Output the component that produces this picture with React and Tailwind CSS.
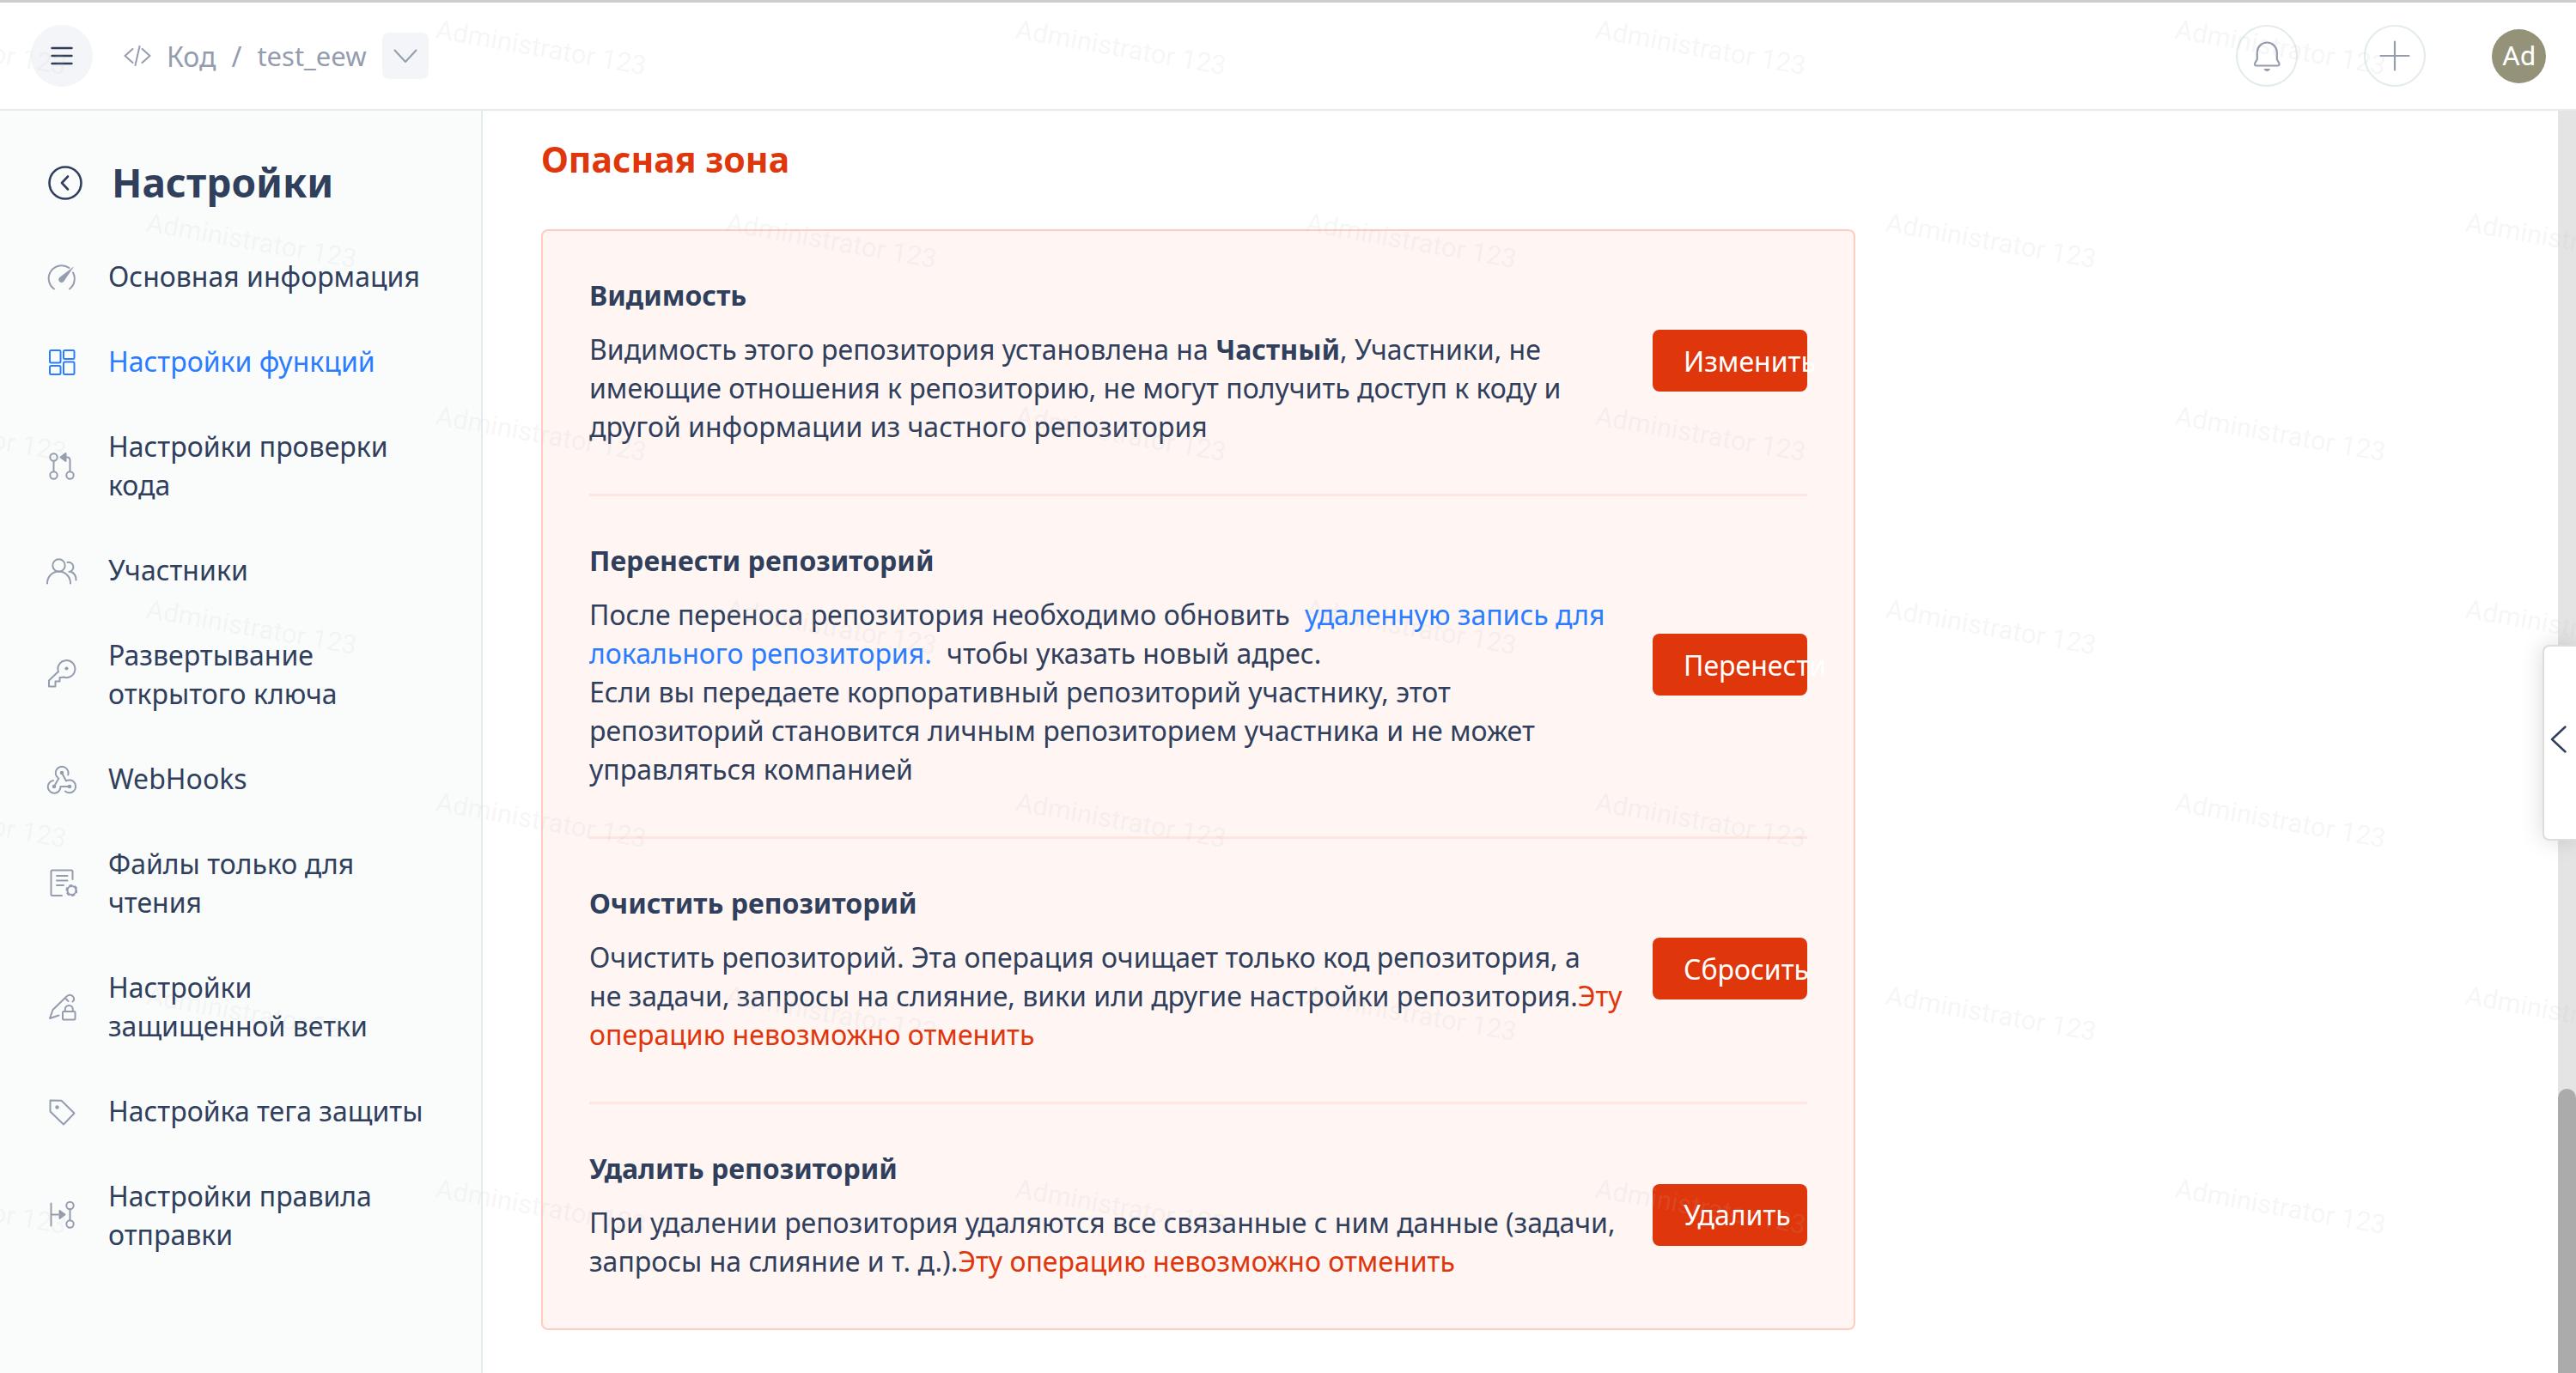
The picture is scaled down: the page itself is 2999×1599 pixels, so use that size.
const icons = {
  gauge: (
    <>
      <path d="M9 32.5A15 15 0 1 1 26.5 8M31 13.500A15 15 0 0 1 27 32.500" />
      <path d="M31 7.500L20.500 23A3.200 3.200 0 1 1 16 18.800Z" fill="currentColor" strokeWidth="0.6" />
    </>
  ),
  grid: (
    <>
      <rect x="4" y="5" width="12.500" height="14.500" rx="1.500" />
      <rect x="20" y="5" width="12.500" height="10" rx="1.500" />
      <rect x="4" y="23" width="12.500" height="10" rx="1.500" />
      <rect x="20" y="18.500" width="12.500" height="14.500" rx="1.500" />
    </>
  ),
  pull: (
    <>
      <circle cx="8.500" cy="8.500" r="4.200" />
      <circle cx="8.500" cy="29.500" r="4.200" />
      <circle cx="27.500" cy="29.500" r="4.200" />
      <path d="M8.500 12.700V25.300M27.500 25.300V12Q27.500 8.500 24 8.500H22" />
      <path d="M16.500 8.500L22.500 4V13Z" fill="currentColor" />
    </>
  ),
  users: (
    <>
      <circle cx="14.500" cy="12.500" r="7.200" />
      <path d="M1 33.500V33A13.500 13.500 0 0 1 28 33V33.500M24.500 9A5.600 5.600 0 1 1 26.500 20M29 20A10 10 0 0 1 34.500 29.500" />
    </>
  ),
  key: (
    <>
      <path d="M14 15.500A10 10 0 1 1 20 21.500L17.500 22H15.500V26.500H10.500V32.500H3V25.500L13.500 15.500" />
      <circle cx="23.500" cy="11.500" r="2.100" fill="currentColor" stroke="none" />
    </>
  ),
  hook: (
    <>
      <path d="M25.200 13.500A7.400 7.400 0 1 0 14.300 17.500L9 27" />
      <path d="M8 20A7.400 7.400 0 1 0 16.500 27H27" />
      <path d="M22 32.500A7.400 7.400 0 1 0 23 20.500L18 11" />
      <g fill="currentColor" stroke="none">
        <circle cx="18" cy="11" r="2.300" />
        <circle cx="9" cy="27" r="2.300" />
        <circle cx="27" cy="27" r="2.300" />
      </g>
    </>
  ),
  file: (
    <>
      <path d="M18 33H7Q5.500 33 5.500 31.500V5Q5.500 3.500 7 3.500H29Q30.500 3.500 30.500 5V14M12 10H24.500M12 15.500H24.500M12 21H20" />
      <circle cx="29.500" cy="27" r="5" strokeWidth="2.200" />
      <circle cx="29.500" cy="27" r="6.200" strokeWidth="1.800" strokeDasharray="2.600 3.900" />
    </>
  ),
  lock: (
    <>
      <path d="M14.500 28.500L4 32L7.500 22L23.500 6.500Q27.500 3 31 6.500Q33.500 10 30.500 12.500M22 8.500L25.500 12" />
      <rect x="19" y="24" width="14.500" height="9.500" rx="1" />
      <path d="M21.800 24V21.500A4.500 4.500 0 0 1 30.800 21.500V24" />
    </>
  ),
  tag: (
    <>
      <path d="M4.500 5.500L17.500 5.800L32.500 20.500L20 33.500L4.500 18.500Z" />
      <circle cx="12.500" cy="13.500" r="2.200" fill="currentColor" stroke="none" />
    </>
  ),
  push: (
    <>
      <circle cx="27.500" cy="7" r="4.200" />
      <circle cx="27.500" cy="28.500" r="4.200" />
      <path d="M27.500 11.200V24.300M5.500 4.500V30.500M5.500 17.500H14" />
      <path d="M15.500 13L21.500 17.500L15.500 22Z" fill="currentColor" />
    </>
  ),
};

function NavIcon({ name }) {
  return (
    <svg viewBox="0 0 36 36" className="size-9 shrink-0" fill="none" stroke="currentColor" strokeWidth="2" strokeLinecap="round" strokeLinejoin="round" aria-hidden="true">
      {icons[name]}
    </svg>
  );
}

const nav = [
  ["gauge", "Основная информация"],
  ["grid", "Настройки функций"],
  ["pull", "Настройки проверки кода"],
  ["users", "Участники"],
  ["key", "Развертывание открытого ключа"],
  ["hook", "WebHooks"],
  ["file", "Файлы только для чтения"],
  ["lock", "Настройки защищенной ветки"],
  ["tag", "Настройка тега защиты"],
  ["push", "Настройки правила отправки"],
];

function Header() {
  return (
    <header className="flex h-[129px] shrink-0 items-center border-t-[3px] border-b-2 border-t-[#cccecc] border-b-[#e3ebee] bg-white pr-[35px] pl-9 text-[#949cae]">
      <button aria-label="Меню" className="flex size-[72px] items-center justify-center rounded-full bg-[#f4f5f8] text-[#303f5c]">
        <svg viewBox="0 0 26 22" className="h-[22px] w-[26px]" stroke="currentColor" strokeWidth="2.4" strokeLinecap="round" aria-hidden="true">
          <path d="M1.500 2H24.500M1.500 11H24.500M1.500 20H24.500" />
        </svg>
      </button>
      <nav className="flex items-center pl-9">
        <svg viewBox="0 0 32 24" className="mr-[18px] h-6 w-8" fill="none" stroke="currentColor" strokeWidth="2" strokeLinecap="round" strokeLinejoin="round" aria-hidden="true">
          <path d="M10.500 4L1.500 12L10.500 20M21.500 4L30.500 12L21.500 20M18.500 1L13.500 23" />
        </svg>
        <a href="#code">Код</a>
        <span className="mx-[18px]">/</span>
        <a href="#repo" className="text-[31px]">test_eew</a>
      </nav>
      <button aria-label="Выбрать репозиторий" className="ml-[18px] flex size-[54px] items-center justify-center rounded-lg bg-[#f4f5f8]">
        <svg viewBox="0 0 28 18" className="h-[18px] w-7" fill="none" stroke="currentColor" strokeWidth="2" strokeLinecap="round" strokeLinejoin="round" aria-hidden="true">
          <path d="M1.500 2.500L14 16L26.500 2.500" />
        </svg>
      </button>
      <div className="ml-auto flex items-center gap-[77px]">
        <button aria-label="Уведомления" className="flex size-[72px] items-center justify-center rounded-full border-2 border-[#e3ebee]">
          <svg viewBox="0 0 36 36" className="size-9" fill="none" stroke="currentColor" strokeWidth="2.200" strokeLinejoin="round" aria-hidden="true">
            <path d="M6.800 14A11.500 11.500 0 0 1 29.800 14V22L32.300 26.500Q33.300 29.500 30.500 29.500H6Q3.300 29.500 4.300 26.500L6.800 22Z" />
            <path d="M14.500 33H22Q21 36 18.300 36Q15.500 36 14.500 33Z" fill="currentColor" stroke="none" />
          </svg>
        </button>
        <button aria-label="Создать" className="flex size-[72px] items-center justify-center rounded-full border-2 border-[#e3ebee]">
          <svg viewBox="0 0 36 36" className="size-9" stroke="currentColor" strokeWidth="2.200" strokeLinecap="round" aria-hidden="true">
            <path d="M18 1.500V34.500M1.500 18H34.500" />
          </svg>
        </button>
        <button className="flex size-[63px] items-center justify-center rounded-full bg-[#95927a] font-['Roboto',sans-serif] text-white">Ad</button>
      </div>
    </header>
  );
}

function Sidebar() {
  return (
    <aside className="w-[562px] shrink-0 border-r-2 border-[#e3ebee] bg-[#fafcfc] pt-[53px] pl-[54px]">
      <div className="flex items-center gap-[34px]">
        <button aria-label="Назад">
          <svg viewBox="0 0 42 42" className="size-[42px]" fill="none" stroke="currentColor" strokeWidth="2.600" strokeLinecap="round" strokeLinejoin="round" aria-hidden="true">
            <circle cx="22" cy="22" r="18.500" />
            <path d="M25 14.500L18 22L25 29.500" />
          </svg>
        </button>
        <h1 className="text-[46px] leading-[60px] font-bold">Настройки</h1>
      </div>
      <nav className="mt-[57px] flex flex-col gap-[54px] pr-[54px]">
        {nav.map(([icon, label]) => (
          <a key={icon} href={"#" + icon} className={icon === "grid" ? "flex items-center gap-9 text-[#2b7dff]" : "flex items-center gap-9"}>
            <span className={icon === "grid" ? "shrink-0" : "shrink-0 text-[#949cae]"}>
              <NavIcon name={icon} />
            </span>
            <span>{label}</span>
          </a>
        ))}
      </nav>
    </aside>
  );
}

function Section({ title, action, children }) {
  return (
    <section className="flex items-center gap-[30px] border-b-[3px] border-[#ffe4df] pt-[52px] pb-[56px] last:border-b-0">
      <div className="flex-1">
        <h3 className="mb-[18px] font-bold">{title}</h3>
        <p>{children}</p>
      </div>
      <button className="h-[72px] w-[180px] shrink-0 rounded-lg bg-[#df360c] pl-9 text-left whitespace-nowrap text-white">{action}</button>
    </section>
  );
}

function Watermark() {
  return (
    <div aria-hidden="true" className="pointer-events-none absolute inset-0 overflow-hidden font-['Roboto',sans-serif] text-[31px] text-[rgba(190,190,190,0.13)] select-none">
      <div className="-mt-[57px] -ml-[506px]">
        {[0, 1, 2, 3, 4, 5, 6, 7].map((row) => (
          <div key={row} className="flex h-[225px] items-center odd:pl-[337px]">
            {[0, 1, 2, 3, 4, 5].map((col) => (
              <span key={col} className="w-[675px] shrink-0">
                <span className="inline-block rotate-10 whitespace-nowrap">Administrator 123</span>
              </span>
            ))}
          </div>
        ))}
      </div>
    </div>
  );
}

export default function App() {
  return (
    <div className="relative flex h-screen flex-col overflow-hidden bg-white font-['Noto_Sans',sans-serif] text-[32px] leading-[45px] text-[#303f5c]">
      <Header />
      <div className="flex min-h-0 flex-1">
        <Sidebar />
        <main className="min-w-0 flex-1 px-[68px] pt-[26px]">
          <h2 className="mb-[52px] text-[41px] leading-[60px] font-bold text-[#df360c]">Опасная зона</h2>
          <div className="max-w-[1530px] rounded-lg border-2 border-[#ffccc2] bg-[#fff5f3] px-[54px]">
            <Section title="Видимость" action="Изменить">
              Видимость этого репозитория установлена на <strong>Частный</strong>, Участники, не имеющие отношения к репозиторию, не могут получить доступ к коду и другой информации из частного репозитория
            </Section>
            <Section title="Перенести репозиторий" action="Перенести">
              После переноса репозитория необходимо обновить{" "}
              <a href="#remote" className="mx-[9px] text-[#2b7dff]">удаленную запись для локального репозитория.</a> чтобы указать новый адрес.
              <br />
              Если вы передаете корпоративный репозиторий участнику, этот репозиторий становится личным репозиторием участника и не может управляться компанией
            </Section>
            <Section title="Очистить репозиторий" action="Сбросить">
              Очистить репозиторий. Эта операция очищает только код репозитория, а
              <br />
              не задачи, запросы на слияние, вики или другие настройки репозитория.
              <span className="text-[#df360c]">Эту операцию невозможно отменить</span>
            </Section>
            <Section title="Удалить репозиторий" action="Удалить">
              При удалении репозитория удаляются все связанные с ним данные (задачи, запросы на слияние и т. д.).
              <span className="text-[#df360c]">Эту операцию невозможно отменить</span>
            </Section>
          </div>
        </main>
        <div className="flex w-[21px] shrink-0 flex-col justify-end bg-[#e4e4e4]">
          <div className="h-[331px] rounded-t-full bg-[#ababab]" />
        </div>
      </div>
      <button aria-label="Открыть панель" className="absolute top-[751px] right-0 flex h-[228px] w-[39px] items-center justify-center rounded-l-lg border-2 border-r-0 border-[#dddddd] bg-white pr-1 pb-2 shadow-[0_0_27px_rgba(0,0,0,0.15)]">
        <svg viewBox="0 0 20 32" className="h-8 w-5" fill="none" stroke="currentColor" strokeWidth="2.400" strokeLinecap="round" strokeLinejoin="round" aria-hidden="true">
          <path d="M17.500 1.500L2 16L17.500 30.500" />
        </svg>
      </button>
      <Watermark />
    </div>
  );
}
